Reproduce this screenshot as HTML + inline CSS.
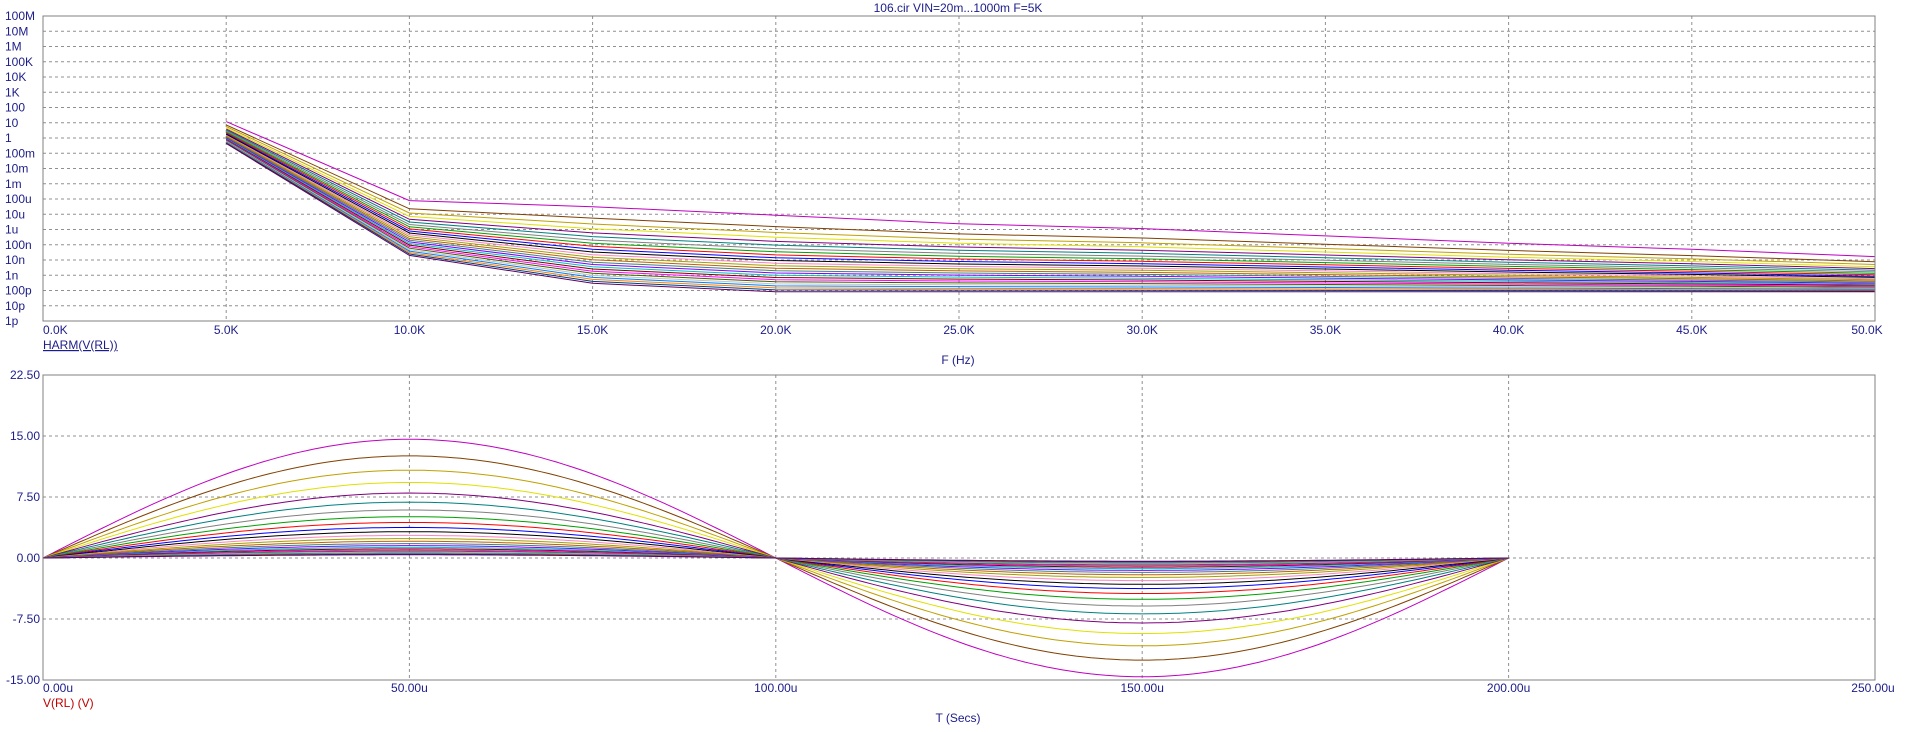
<!DOCTYPE html>
<html><head><meta charset="utf-8"><style>
html,body{margin:0;padding:0;background:#fff;width:1907px;height:732px;overflow:hidden}
svg{display:block}
text{font-family:"Liberation Sans",sans-serif;font-size:12px;fill:#1c1c8a}
</style></head><body>
<svg id="s" width="1907" height="732" xmlns="http://www.w3.org/2000/svg">
<text x="958" y="12" text-anchor="middle">106.cir VIN=20m...1000m F=5K</text>
<g id="gtop"></g><g id="gbot"></g>
<text x="43" y="349" text-decoration="underline">HARM(V(RL))</text>
<text x="958" y="364" text-anchor="middle">F (Hz)</text>
<text x="43" y="707" style="fill:#c00000">V(RL) (V)</text>
<text x="958" y="722" text-anchor="middle">T (Secs)</text>
</svg>
<script>
(function(){
const NS="http://www.w3.org/2000/svg";
function el(p,t,a,txt){const e=document.createElementNS(NS,t);for(const k in a)e.setAttribute(k,a[k]);if(txt!=null)e.textContent=txt;p.appendChild(e);return e;}
const L=43,R=1875,W=R-L;
const gt=document.getElementById('gtop'),gb=document.getElementById('gbot');
const cols=["#c000c0","#804000","#c0a000","#e0e000","#800080","#008080","#808080","#00a000","#ff0000","#0000ff","#000000","#ff80c0","#a0a000","#c06000","#408080","#8000ff","#00c0c0","#800000","#ff00ff","#406000","#c0c0c0","#0080ff","#ff8000","#004080","#600060"];
const T0=16,T1=321;
const ylab=["100M","10M","1M","100K","10K","1K","100","10","1","100m","10m","1m","100u","10u","1u","100n","10n","1n","100p","10p","1p"];
for(let i=0;i<21;i++){const y=T0+i*(T1-T0)/20;
 if(i>0&&i<20)el(gt,'line',{x1:L,x2:R,y1:y,y2:y,stroke:'#909090','stroke-dasharray':'3,3'});
 el(gt,'text',{x:5,y:y+4},ylab[i]);}
for(let i=0;i<=10;i++){const x=L+i*W/10;
 if(i>0&&i<10)el(gt,'line',{x1:x,x2:x,y1:T0,y2:T1,stroke:'#909090','stroke-dasharray':'3,3'});
 el(gt,'text',{x:i==10?x-8:x,y:334,'text-anchor':i==0?'start':'middle'},(i*5).toFixed(1)+'K');}
const S=1.216;
const topC=[100,165,170,177,184,188,194,200,205,211].map(v=>v*S);
const botC=[118,210,233,240,240,240,240,240,240,240].map(v=>v*S);
const N=25;
for(let c=0;c<N;c++){const t=c/(N-1);let d='';
 const floor=(228+12*t)*S;
 for(let h=1;h<=10;h++){const x=L+h*W/10;
  let y=topC[h-1]+(botC[h-1]-topC[h-1])*Math.pow(t,0.6);
  if(h>2)y=Math.min(y,floor);
  d+=(h==1?'M':'L')+x.toFixed(1)+','+y.toFixed(1);}
 el(gt,'path',{d:d,fill:'none',stroke:cols[c%cols.length],'stroke-width':1});}
el(gt,'rect',{x:L,y:T0,width:W,height:T1-T0,fill:'none',stroke:'#808080'});
const B0=375,B1=680,BH=(B1-B0)/5;
const bl=["22.50","15.00","7.50","0.00","-7.50","-15.00"];
for(let i=0;i<=5;i++){const y=B0+i*BH;
 if(i>0&&i<5)el(gb,'line',{x1:L,x2:R,y1:y,y2:y,stroke:'#909090','stroke-dasharray':'3,3'});
 el(gb,'text',{x:40,y:y+4,'text-anchor':'end'},bl[i]);}
const xl=["0.00u","50.00u","100.00u","150.00u","200.00u","250.00u"];
for(let i=0;i<=5;i++){const x=L+i*W/5;
 if(i>0&&i<5)el(gb,'line',{x1:x,x2:x,y1:B0,y2:B1,stroke:'#909090','stroke-dasharray':'3,3'});
 el(gb,'text',{x:i==5?x-2:x,y:692,'text-anchor':i==0?'start':'middle'},xl[i]);}
const y0=B0+3*BH,pu=BH/7.5,per=4*W/5;
for(let c=0;c<N;c++){const A=14.6*Math.pow(0.86,c);let d='';
 for(let k=0;k<=200;k++){const x=L+per*k/200;const y=y0-A*pu*Math.sin(2*Math.PI*k/200);
  d+=(k?'L':'M')+x.toFixed(1)+','+y.toFixed(1);}
 el(gb,'path',{d:d,fill:'none',stroke:cols[c%cols.length],'stroke-width':1});}
el(gb,'rect',{x:L,y:B0,width:W,height:B1-B0,fill:'none',stroke:'#808080'});
})();
</script>
</body></html>
